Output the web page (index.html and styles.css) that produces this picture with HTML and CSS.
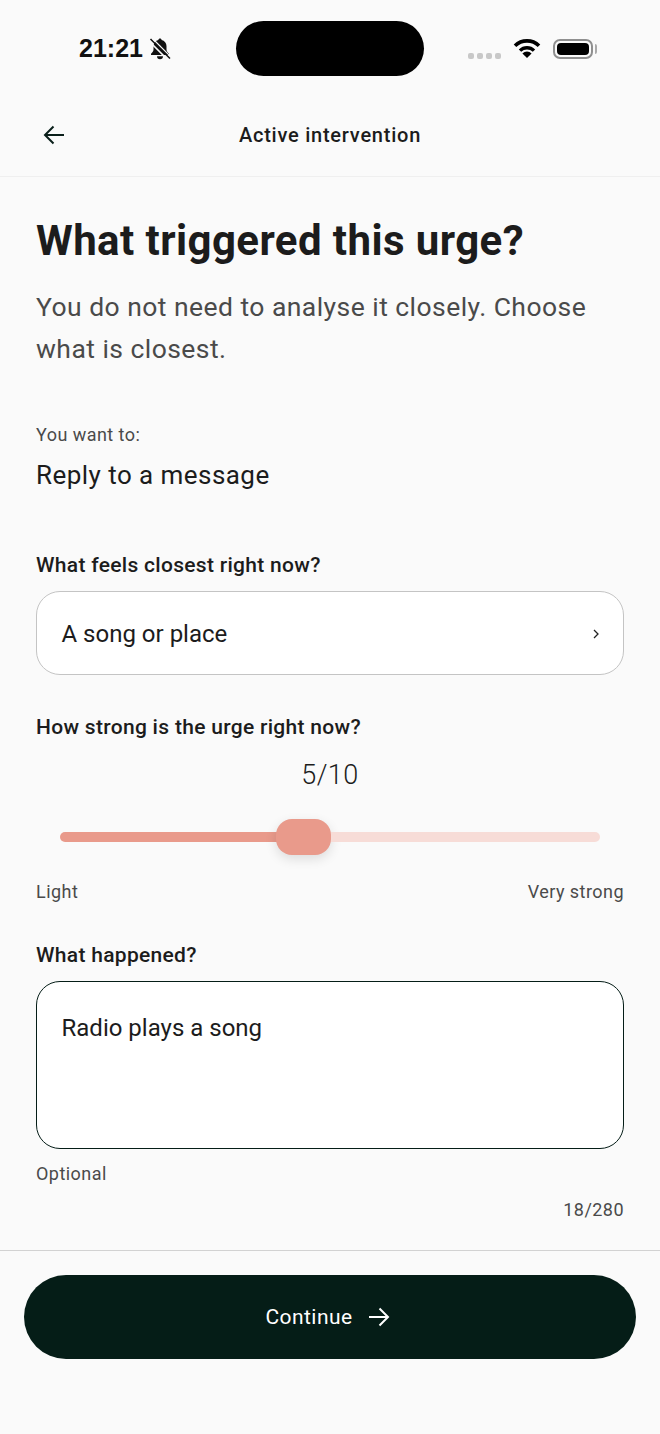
FILE: index.html
```html
<!DOCTYPE html>
<html lang="en">
<head>
  <meta charset="UTF-8"/>
  <meta name="viewport" content="width=device-width, initial-scale=1.0"/>
  <title>Active intervention</title>
  <link rel="stylesheet" href="styles.css"/>
</head>
<body>
  <div class="status-bar">
    <div class="status-left">
      <span class="clock">21:21</span>
      <svg class="bell" width="22" height="22" viewBox="0 0 22 22">
        <path d="M11 .5c-.9 0-1.500.6-1.600 1.400C6.400 2.600 4.500 5 4.500 8v3.500c0 1.800-1.100 3-2.500 4.200V17h18v-1.300c-1.400-1.200-2.500-2.400-2.500-4.200V8c0-3-1.900-5.400-4.900-6.100C12.500 1.100 11.900.5 11 .5z" fill="#111"/>
        <path d="M8 18.300a3 3 0 0 0 6 0z" fill="#111"/>
        <path d="M0 3l19 19" stroke="#fafafa" stroke-width="1.600"/>
        <path d="M1.500 1l19.500 19.500" stroke="#111" stroke-width="1.600"/>
        <path d="M3.500 0.500l19 19" stroke="#fafafa" stroke-width="1.200"/>
      </svg>
    </div>
    <div class="island"></div>
    <div class="status-right">
      <span class="signal"><i></i><i></i><i></i><i></i></span>
      <svg class="wifi" width="28" height="20" viewBox="0 0 28 20">
        <path d="M2 7.800a17 17 0 0 1 24 0" fill="none" stroke="#000" stroke-width="3.600"/>
        <path d="M7 12.600a10 10 0 0 1 14 0" fill="none" stroke="#000" stroke-width="3.400"/>
        <path d="M14 20l-4.600-4.600a6.500 6.500 0 0 1 9.200 0z" fill="#000"/>
      </svg>
      <span class="battery"><b></b></span>
    </div>
  </div>

  <header class="top-nav">
    <svg class="back" width="24" height="24" viewBox="0 0 24 24">
      <path d="M22 12H3M11.500 3.500L3 12l8.500 8.500" fill="none" stroke="#0a1f1a" stroke-width="2"/>
    </svg>
    <span class="nav-title">Active intervention</span>
  </header>

  <main class="content">
    <h1>What triggered this urge?</h1>
    <p class="lead">You do not need to analyse it closely. Choose what is closest.</p>

    <div class="want-label">You want to:</div>
    <div class="want-value">Reply to a message</div>

    <label class="field-label first">What feels closest right now?</label>
    <div class="select-box">
      <span>A song or place</span>
      <svg width="10" height="12" viewBox="0 0 10 12">
        <path d="M3 2l4 4-4 4" fill="none" stroke="#222" stroke-width="1.300"/>
      </svg>
    </div>

    <label class="field-label strength">How strong is the urge right now?</label>
    <div class="score">5/10</div>
    <div class="slider">
      <div class="slider-fill"></div>
      <div class="slider-thumb"></div>
      <div class="slider-rest"></div>
    </div>
    <div class="scale-labels">
      <span>Light</span>
      <span>Very strong</span>
    </div>

    <label class="field-label happened">What happened?</label>
    <div class="text-box">Radio plays a song</div>
    <div class="hint">Optional</div>
    <div class="counter">18/280</div>
  </main>

  <footer class="bottom-bar">
    <button class="continue-btn">
      Continue
      <svg width="24" height="24" viewBox="0 0 24 24">
        <path d="M2 12h19M12.500 3.500L21 12l-8.500 8.500" fill="none" stroke="#fff" stroke-width="2"/>
      </svg>
    </button>
  </footer>
</body>
</html>
```

FILE: styles.css
```css
:root {
  --bg: #fafafa;
  --ink: #1c1c1c;
  --muted: #4a4a4a;
  --dark: #051d17;
  --salmon: #e99a8b;
  --salmon-light: #f7dcd7;
  --font: "Roboto", "Noto Sans", sans-serif;
}

* {
  box-sizing: border-box;
  margin: 0;
  padding: 0;
}

body {
  width: 660px;
  height: 1434px;
  background: var(--bg);
  color: var(--ink);
  font-family: var(--font);
  letter-spacing: 0.45px;
  display: flex;
  flex-direction: column;
  overflow: hidden;
}

/* Status bar */
.status-bar {
  height: 96px;
  display: grid;
  grid-template-columns: 1fr 188px 1fr;
  padding-top: 21px;
  align-items: start;
}
.status-left {
  display: flex;
  align-items: center;
  gap: 6px;
  height: 55px;
  padding-left: 79px;
}
.clock {
  font-family: "Liberation Sans", sans-serif;
  font-size: 25px;
  font-weight: 700;
  letter-spacing: 0;
  color: #111;
}
.island {
  height: 55px;
  background: #000;
  border-radius: 28px;
}
.status-right {
  display: flex;
  align-items: center;
  height: 55px;
  padding-left: 44px;
}
.signal {
  display: flex;
  gap: 3px;
  margin-top: 14px;
  margin-right: 12px;
}
.signal i {
  width: 6px;
  height: 6px;
  border-radius: 2px;
  background: #c8c8c8;
}
.wifi { margin-top: -1px; }
.battery {
  position: relative;
  width: 40px;
  height: 20px;
  margin-left: 12px;
  padding: 2px;
  border: 2px solid #8f8f8f;
  border-radius: 7px;
}
.battery b {
  display: block;
  width: 100%;
  height: 100%;
  background: #000;
  border-radius: 4px;
}
.battery::after {
  content: '';
  position: absolute;
  right: -6px;
  top: 3px;
  width: 2px;
  height: 10px;
  background: #aaa;
  border-radius: 0 2px 2px 0;
}

/* Top nav */
.top-nav {
  position: relative;
  height: 81px;
  border-bottom: 1px solid #efefef;
  display: flex;
  align-items: center;
  justify-content: center;
}
.back {
  position: absolute;
  left: 42px;
  top: 27px;
}
.nav-title {
  font-size: 20px;
  font-weight: 500;
  letter-spacing: 0.76px;
  margin-top: -2px;
}

/* Content */
.content {
  flex: 1;
  padding: 39px 36px 0;
}
h1 {
  font-size: 42px;
  line-height: 50px;
  font-weight: 700;
  letter-spacing: 0.42px;
}
.lead {
  margin-top: 20px;
  font-size: 26.5px;
  line-height: 42px;
  color: var(--muted);
}
.want-label {
  margin-top: 53px;
  font-size: 18px;
  line-height: 24px;
  color: var(--muted);
}
.want-value {
  margin-top: 11px;
  font-size: 26px;
  line-height: 34px;
}
.field-label {
  display: block;
  font-size: 21px;
  line-height: 28px;
  font-weight: 500;
  letter-spacing: 0.3px;
}
.field-label.first { margin-top: 59px; }
.field-label.strength { margin-top: 38px; }
.field-label.happened { margin-top: 37px; }

.select-box {
  margin-top: 12px;
  height: 84px;
  background: #fff;
  border: 1.5px solid #c4c4c4;
  border-radius: 24px;
  padding: 1px 22px 0 24.5px;
  display: flex;
  align-items: center;
  justify-content: space-between;
  font-size: 24px;
  letter-spacing: 0;
}

.score {
  margin-top: 16px;
  text-align: center;
  font-size: 27px;
  font-weight: 300;
  line-height: 36px;
}

/* Slider */
.slider {
  display: flex;
  align-items: center;
  height: 38px;
  margin: 25px 24px 0;
}
.slider-fill {
  width: 220px;
  height: 10px;
  background: var(--salmon);
  border-radius: 5px 0 0 5px;
}
.slider-thumb {
  width: 55px;
  height: 36px;
  margin-left: -4px;
  background: var(--salmon);
  border-radius: 16px;
  box-shadow: 0 4px 12px rgba(0,0,0,0.12);
}
.slider-rest {
  flex: 1;
  height: 10px;
  background: var(--salmon-light);
  border-radius: 0 5px 5px 0;
}
.scale-labels {
  margin-top: 24px;
  display: flex;
  justify-content: space-between;
  font-size: 18px;
  line-height: 24px;
  color: var(--muted);
}

.text-box {
  margin-top: 12px;
  height: 168px;
  background: #fff;
  border: 1.5px solid var(--dark);
  border-radius: 24px;
  padding: 28.5px 24.5px;
  font-size: 24px;
  line-height: 34px;
  letter-spacing: 0;
}
.hint,
.counter {
  font-size: 18px;
  line-height: 24px;
  color: var(--muted);
}
.hint { margin-top: 13px; }
.counter {
  margin-top: 12px;
  text-align: right;
}

/* Bottom */
.bottom-bar {
  height: 184px;
  border-top: 1.5px solid #d2d2d2;
  padding: 24px 24px 0;
}
.continue-btn {
  width: 100%;
  height: 84px;
  border: none;
  border-radius: 42px;
  padding-right: 4px;
  background: var(--dark);
  color: #fff;
  font-family: var(--font);
  font-size: 21px;
  font-weight: 400;
  letter-spacing: 0.45px;
  display: flex;
  align-items: center;
  justify-content: center;
  gap: 14px;
}
```
